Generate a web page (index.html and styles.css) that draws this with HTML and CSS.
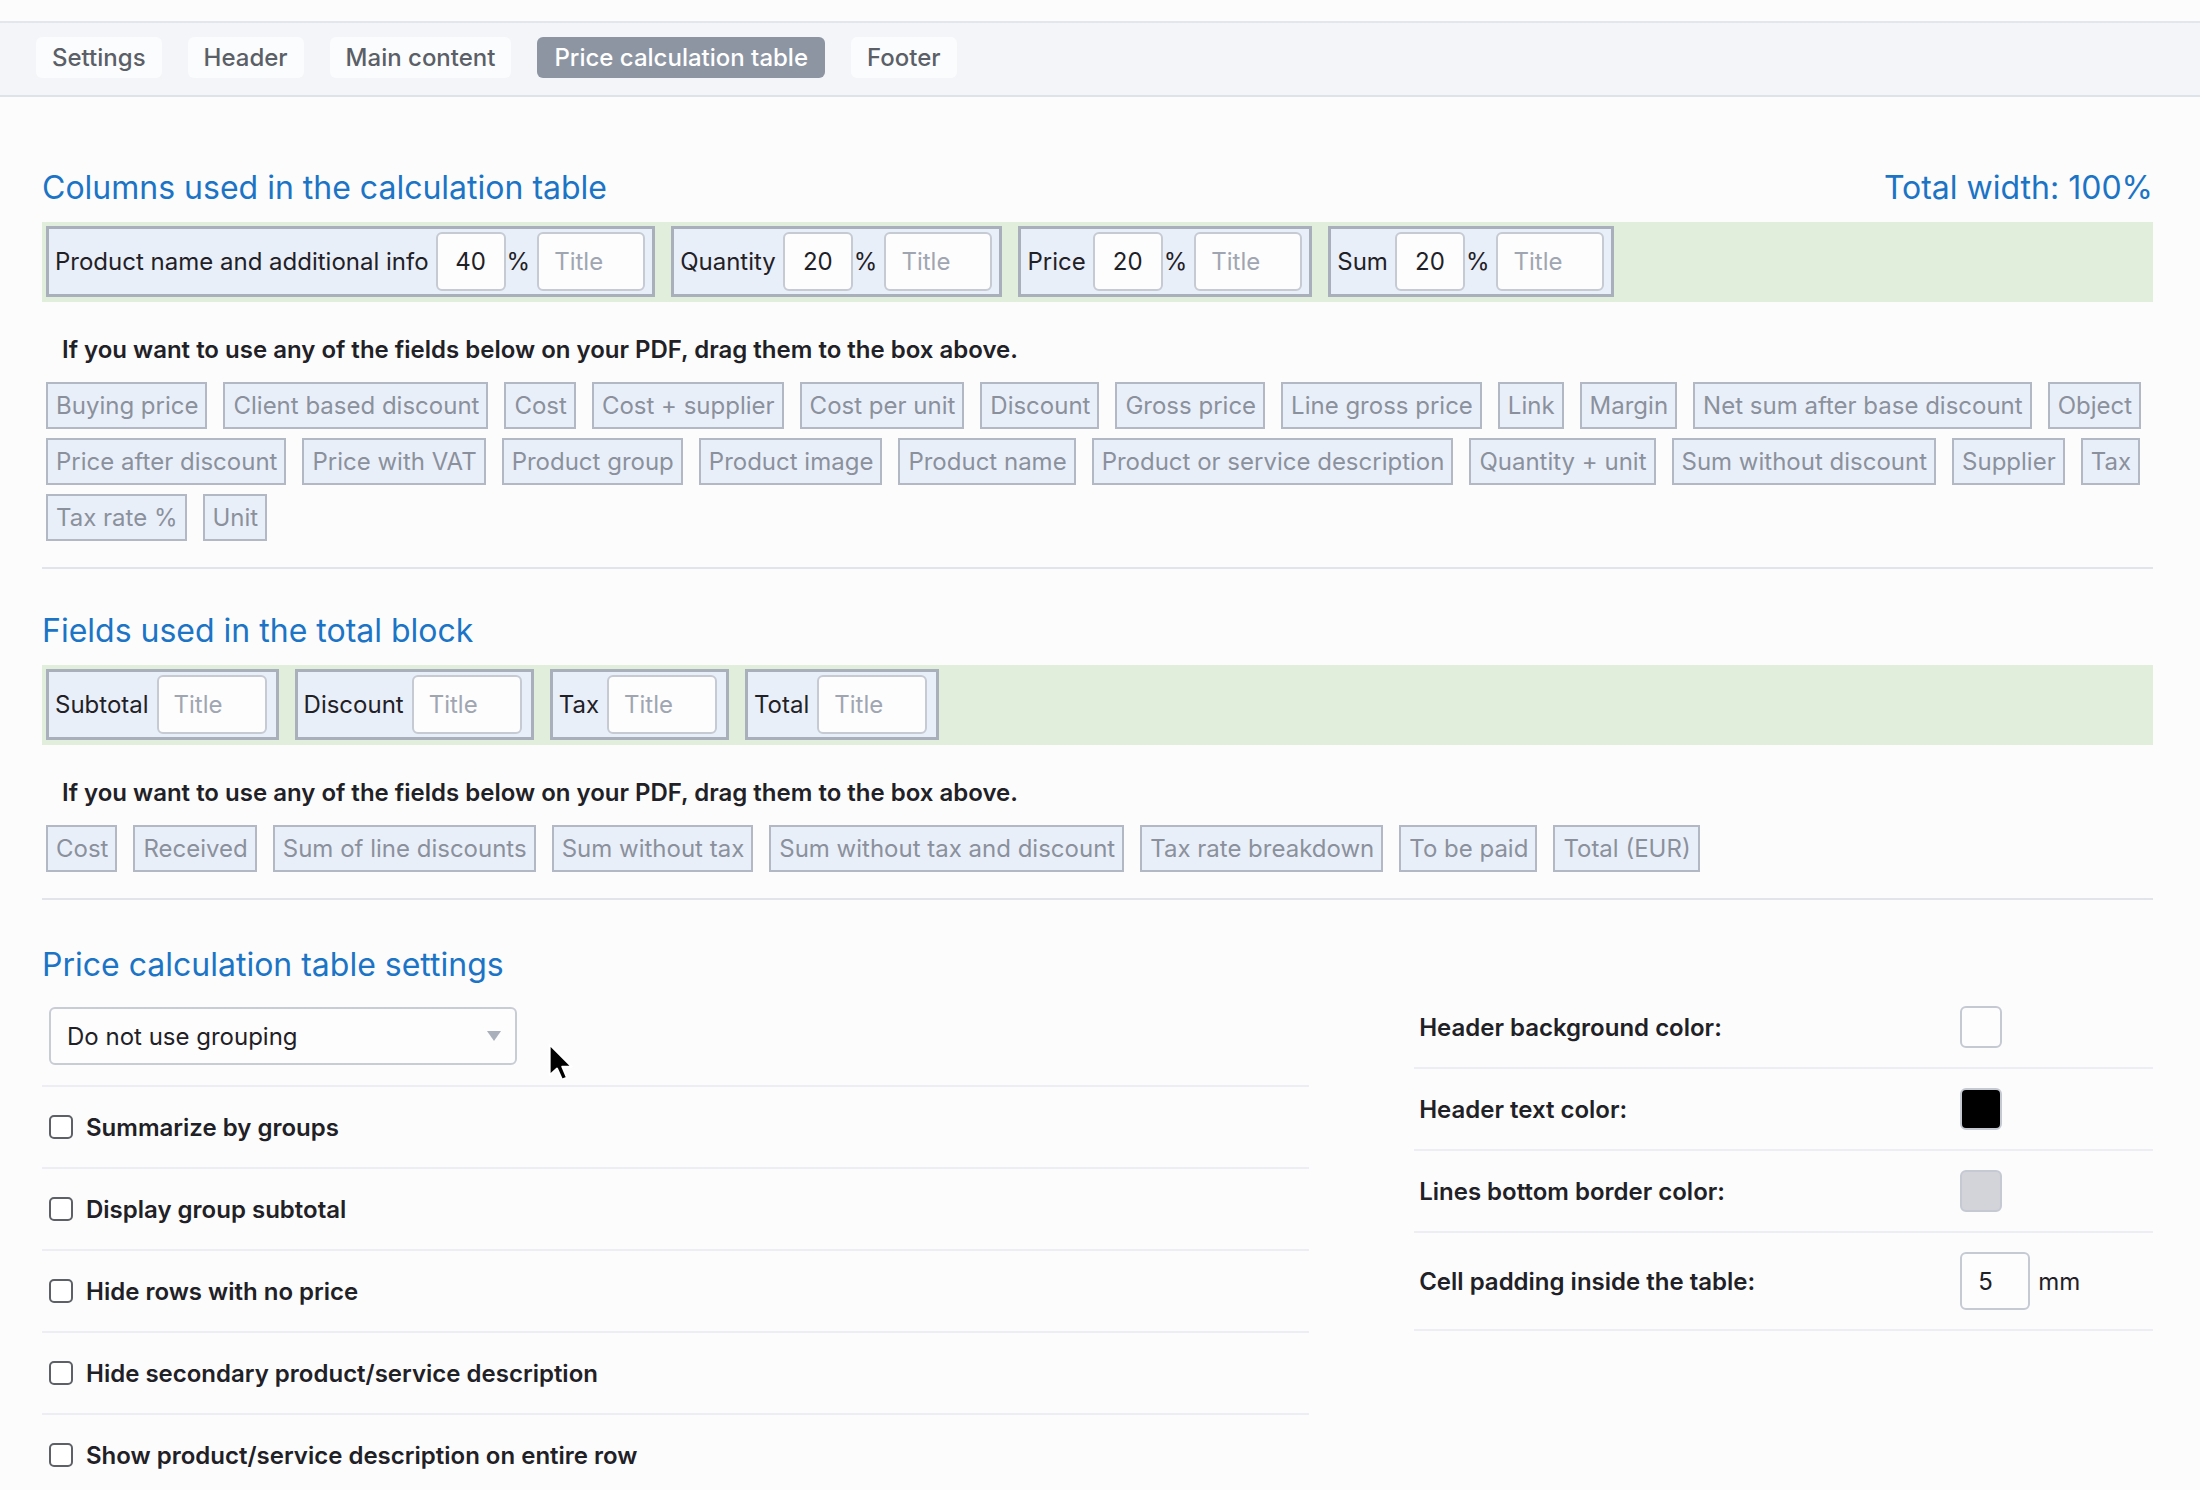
FILE: index.html
```html
<!DOCTYPE html>
<html lang="en">
<head>
<meta charset="utf-8">
<title>Price calculation table</title>
<link rel="stylesheet" href="styles.css">
</head>
<body>
<div class="topstrip"></div>
<nav class="tabbar">
  <span class="tab">Settings</span>
  <span class="tab">Header</span>
  <span class="tab">Main content</span>
  <span class="tab active">Price calculation table</span>
  <span class="tab">Footer</span>
</nav>

<main class="main">
  <h2 class="section-head first"><span>Columns used in the calculation table</span><span>Total width: 100%</span></h2>
  <div class="dropzone">
    <div class="col-item"><span class="label">Product name and additional info</span><input class="num" value="40"><span class="pct">%</span><input class="title-in" placeholder="Title"></div>
    <div class="col-item"><span class="label">Quantity</span><input class="num" value="20"><span class="pct">%</span><input class="title-in" placeholder="Title"></div>
    <div class="col-item"><span class="label">Price</span><input class="num" value="20"><span class="pct">%</span><input class="title-in" placeholder="Title"></div>
    <div class="col-item"><span class="label">Sum</span><input class="num" value="20"><span class="pct">%</span><input class="title-in" placeholder="Title"></div>
  </div>
  <p class="hint">If you want to use any of the fields below on your PDF, drag them to the box above.</p>
  <div class="chips">
    <span class="chip">Buying price</span>
    <span class="chip">Client based discount</span>
    <span class="chip">Cost</span>
    <span class="chip">Cost + supplier</span>
    <span class="chip">Cost per unit</span>
    <span class="chip">Discount</span>
    <span class="chip">Gross price</span>
    <span class="chip">Line gross price</span>
    <span class="chip">Link</span>
    <span class="chip">Margin</span>
    <span class="chip">Net sum after base discount</span>
    <span class="chip">Object</span>
    <span class="chip">Price after discount</span>
    <span class="chip">Price with VAT</span>
    <span class="chip">Product group</span>
    <span class="chip">Product image</span>
    <span class="chip">Product name</span>
    <span class="chip">Product or service description</span>
    <span class="chip">Quantity + unit</span>
    <span class="chip">Sum without discount</span>
    <span class="chip">Supplier</span>
    <span class="chip">Tax</span>
    <span class="chip">Tax rate %</span>
    <span class="chip">Unit</span>
  </div>
  <div class="divider"></div>

  <h2 class="section-head"><span>Fields used in the total block</span></h2>
  <div class="dropzone">
    <div class="col-item total"><span class="label">Subtotal</span><input class="title-in" placeholder="Title"></div>
    <div class="col-item total"><span class="label">Discount</span><input class="title-in" placeholder="Title"></div>
    <div class="col-item total"><span class="label">Tax</span><input class="title-in" placeholder="Title"></div>
    <div class="col-item total"><span class="label">Total</span><input class="title-in" placeholder="Title"></div>
  </div>
  <p class="hint">If you want to use any of the fields below on your PDF, drag them to the box above.</p>
  <div class="chips">
    <span class="chip">Cost</span>
    <span class="chip">Received</span>
    <span class="chip">Sum of line discounts</span>
    <span class="chip">Sum without tax</span>
    <span class="chip">Sum without tax and discount</span>
    <span class="chip">Tax rate breakdown</span>
    <span class="chip">To be paid</span>
    <span class="chip">Total (EUR)</span>
  </div>
  <div class="divider"></div>

  <h2 class="section-head settings-head"><span>Price calculation table settings</span></h2>
  <div class="settings">
    <div class="left">
      <div class="row select-row">
        <div class="select">
          <span>Do not use grouping</span>
          <svg class="caret" width="14" height="10" viewBox="0 0 14 10"><path d="M0 0 H14 L7 10 Z" fill="#a9afbb"/></svg>
        </div>
      </div>
      <label class="row"><input type="checkbox" class="cb"><span>Summarize by groups</span></label>
      <label class="row"><input type="checkbox" class="cb"><span>Display group subtotal</span></label>
      <label class="row"><input type="checkbox" class="cb"><span>Hide rows with no price</span></label>
      <label class="row"><input type="checkbox" class="cb"><span>Hide secondary product/service description</span></label>
      <label class="row"><input type="checkbox" class="cb"><span>Show product/service description on entire row</span></label>
    </div>
    <div class="right">
      <div class="rrow"><span class="rlabel">Header background color:</span><span class="swatch white"></span></div>
      <div class="rrow"><span class="rlabel">Header text color:</span><span class="swatch black"></span></div>
      <div class="rrow"><span class="rlabel">Lines bottom border color:</span><span class="swatch grey"></span></div>
      <div class="rrow pad-row"><span class="rlabel">Cell padding inside the table:</span><input class="mm-in" value="5"><span class="unit">mm</span></div>
    </div>
  </div>
</main>

<svg class="cursor" width="30" height="42" viewBox="0 0 24 34">
  <path d="M2 2 L2 27 L8 21.5 L12 30.5 L16 28.8 L12.2 20 L20 20 Z" fill="#000" stroke="#fff" stroke-width="1.6" stroke-linejoin="round"/>
</svg>
</body>
</html>
```

FILE: styles.css
```css
body {
  margin: 0;
  background: #fcfcfd;
  font-family: Inter, "Liberation Sans", sans-serif;
  color: #1f2126;
  position: relative;
}

.topstrip {
  height: 21px;
}

.tabbar {
  display: flex;
  gap: 26px;
  background: #f3f5f9;
  border-top: 2px solid #e3e6ec;
  border-bottom: 2px solid #dee2e9;
  padding: 14px 0 17px 36px;
}

.tab {
  height: 41px;
  line-height: 41px;
  padding: 0 16px;
  border-radius: 6px;
  background: #fbfcfd;
  color: #5b5f67;
  font-size: 24px;
  font-weight: 500;
}

.tab.active {
  background: #8d95a3;
  color: #fff;
  padding: 0 17px;
}

.main {
  padding: 0 47px 0 42px;
}

.section-head {
  display: flex;
  justify-content: space-between;
  margin: 42px 0 15px;
  font-size: 32px;
  line-height: 39px;
  font-weight: 400;
  color: #1b74c5;
}

.section-head.first {
  margin-top: 71px;
}

.section-head.settings-head {
  margin: 45px 0 3px;
}

.dropzone {
  display: flex;
  align-items: flex-start;
  gap: 16px;
  height: 80px;
  box-sizing: border-box;
  padding: 4px;
  background: #e0eedb;
}

.col-item {
  display: flex;
  align-items: center;
  height: 71px;
  box-sizing: border-box;
  border: 3px solid #a9afbb;
  background: #e9eff9;
  padding: 0 7px 0 6px;
  font-size: 24px;
}

.col-item .label {
  margin-right: 7px;
}

.col-item.total {
  padding-right: 9px;
}

.col-item.total .label {
  margin-right: 8px;
}

.num,
.title-in,
.mm-in {
  height: 59px;
  box-sizing: border-box;
  border: 2px solid #c5cad3;
  border-radius: 6px;
  background: #fdfdfe;
  font-family: inherit;
  font-size: 24px;
  color: #1f2126;
  outline: none;
  margin: 0;
}

.num {
  width: 70px;
  padding: 0;
  text-align: center;
}

.title-in {
  width: 108px;
  padding: 0 0 0 15px;
}

.col-item.total .title-in {
  width: 110px;
}

.title-in::placeholder {
  color: #a0a6b1;
}

.pct {
  margin: 0 7px 0 1px;
}

.hint {
  margin: 33px 0 18px 20px;
  font-size: 24px;
  line-height: 29px;
  font-weight: 600;
}

.chips {
  display: flex;
  flex-wrap: wrap;
  gap: 9px 16px;
  padding-left: 4px;
}

.chip {
  height: 47px;
  box-sizing: border-box;
  border: 2px solid #b2b8c4;
  background: #e9eff9;
  color: #8b919c;
  font-size: 24px;
  line-height: 43px;
  padding: 0 7px 0 8px;
}

.divider {
  height: 2px;
  background: #e1e4ea;
  margin-top: 26px;
}

.settings {
  display: flex;
  justify-content: space-between;
}

.left {
  width: 60%;
}

.right {
  width: 35%;
}

.row {
  display: flex;
  align-items: center;
  min-height: 80px;
  padding-left: 7px;
  border-bottom: 2px solid #eceef3;
  font-size: 24px;
  font-weight: 600;
}

.row.select-row {
  padding-top: 20px;
  padding-bottom: 20px;
  min-height: 0;
}

.select {
  display: flex;
  align-items: center;
  justify-content: space-between;
  width: 468px;
  height: 58px;
  box-sizing: border-box;
  border: 2px solid #c8ccd5;
  border-radius: 6px;
  background: #fdfdfe;
  padding: 0 14px 0 16px;
  font-weight: 400;
}

.cb {
  appearance: none;
  -webkit-appearance: none;
  width: 24px;
  height: 24px;
  margin: 0 13px 0 0;
  box-sizing: border-box;
  border: 2px solid #5d6066;
  border-radius: 5px;
  background: #fff;
}

.rrow {
  display: flex;
  align-items: center;
  min-height: 80px;
  padding-left: 5px;
  border-bottom: 2px solid #eceef3;
  font-size: 24px;
}

.rlabel {
  width: 541px;
  font-weight: 600;
}

.swatch {
  width: 42px;
  height: 42px;
  box-sizing: border-box;
  border: 2px solid #c5c9d2;
  border-radius: 6px;
}

.swatch.white { background: #fdfdfe; }
.swatch.black { background: #000; }
.swatch.grey { background: #d2d4d9; }

.rrow.pad-row {
  min-height: 0;
  padding-top: 19px;
  padding-bottom: 19px;
}

.mm-in {
  width: 70px;
  height: 58px;
  padding: 0 0 0 16px;
}

.unit {
  margin-left: 8px;
}

.cursor {
  position: absolute;
  left: 547px;
  top: 1042px;
}
```
